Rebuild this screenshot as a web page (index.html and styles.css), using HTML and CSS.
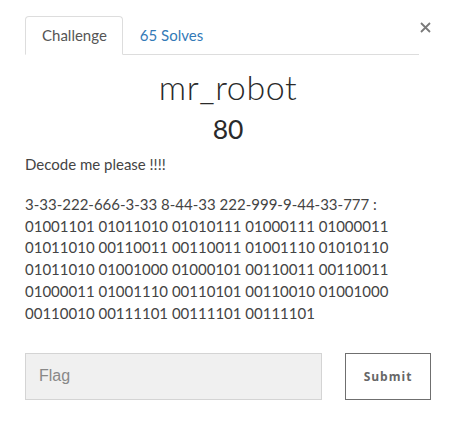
FILE: index.html
```html
<!DOCTYPE html>
<html>
<head>
<meta charset="utf-8">
<link rel="stylesheet" href="styles.css">
</head>
<body>
<div class="modal">
  <div class="head">
    <ul class="tabs">
      <li class="tab active">Challenge</li>
      <li class="tab"><a href="#">65 Solves</a></li>
    </ul>
    <button class="close" aria-label="Close"><svg width="11" height="11" viewBox="0 0 11 11"><path d="M1 1 L10 10 M10 1 L1 10" stroke="#7a7a7a" stroke-width="1.8" fill="none"/></svg></button>
  </div>
  <h2 class="title">mr_robot</h2>
  <h3 class="value">80</h3>
  <p class="desc">Decode me please !!!!</p>
  <p class="desc code">3-33-222-666-3-33 8-44-33 222-999-9-44-33-777 : 01001101 01011010 01010111 01000111 01000011 01011010 00110011 00110011 01001110 01010110 01011010 01001000 01000101 00110011 00110011 01000011 01001110 00110101 00110010 01001000 00110010 00111101 00111101 00111101</p>
  <form class="submit-row">
    <input class="flag" type="text" placeholder="Flag">
    <button class="submit" type="button">Submit</button>
  </form>
</div>
</body>
</html>
```
FILE: styles.css
```css
* { box-sizing: border-box; }
html, body { margin: 0; padding: 0; background: #fff; }
body { font-family: Lato, "Open Sans", sans-serif; color: #444; }
.modal { width: 453px; padding: 16px 22px 0 25px; }
.head { display: flex; align-items: flex-start; }
.tabs {
  list-style: none; margin: 0; padding: 0;
  display: flex; width: 394px;
  border-bottom: 1px solid #ddd;
}
.tab {
  font-size: 15px; line-height: 20px;
  padding: 8px 15px 9px 16px;
  margin-bottom: -1px;
  border: 1px solid transparent;
  border-radius: 4px 4px 0 0;
  color: #555;
}
.tab.active { border-color: #ddd #ddd #fff #ddd; background: #fff; }
.tab a { color: #337ab7; text-decoration: none; }
.close {
  border: 0; background: none; padding: 0; margin: 6px 0 0 1px;
  width: 11px; height: 11px; cursor: pointer; display: block; line-height: 0;
}
.title {
  margin: 12px 0 0 0; text-align: center;
  font-size: 34px; line-height: 40px; font-weight: 300;
  letter-spacing: 0.6px; color: #2a2a2a;
}
.value {
  margin: 7px 0 0 0; text-align: center;
  font-size: 26.5px; line-height: 30px; font-weight: 400; color: #2a2a2a;
}
.desc { margin: 10px 0 0 0; font-size: 15px; line-height: 21.8px; color: #444; width: 400px; }
.code { margin-top: 18px; }
.submit-row { display: flex; gap: 23px; margin-top: 28px; }
.flag {
  width: 297px; height: 47px; margin: 0;
  background: #f0f0f0; border: 1px solid #d4d4d4;
  padding: 0 13px; font-family: "Liberation Sans", Arial, sans-serif;
  font-size: 16px; color: #555; outline: none;
}
.flag::placeholder { color: #888; }
.submit {
  width: 86px; height: 47px; margin: 0;
  background: #fff; border: 1px solid #6f6f6f;
  font-family: "Open Sans", sans-serif; font-weight: 700;
  font-size: 12px; letter-spacing: 1px; color: #666;
}
```
